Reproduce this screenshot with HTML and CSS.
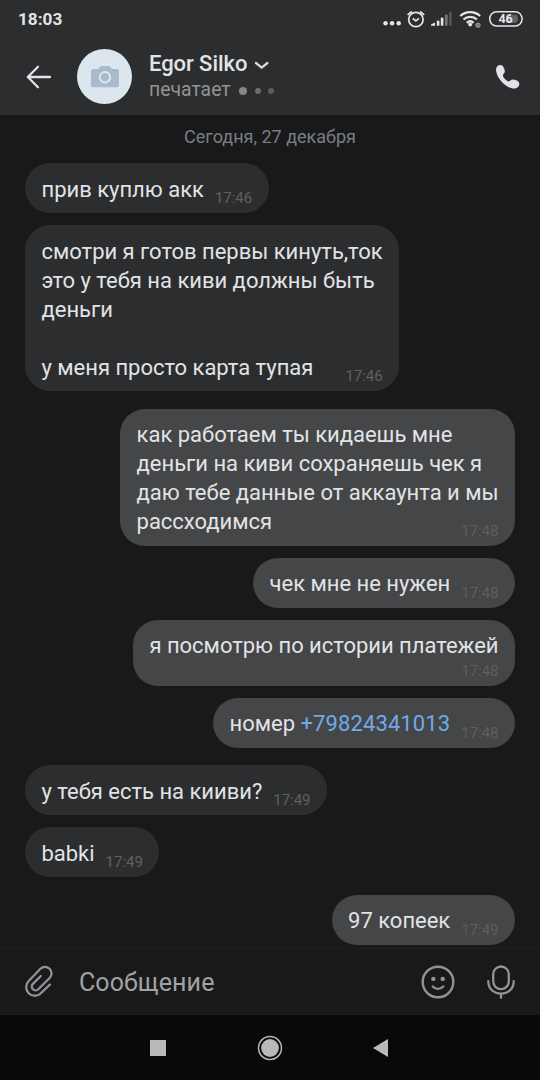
FILE: index.html
```
<!DOCTYPE html>
<html lang="ru">
<head>
    <meta charset="UTF-8">
    <meta name="viewport" content="width=device-width, initial-scale=1.0">
    <title>Egor Silko</title>
    <link rel="stylesheet" href="styles.css">
</head>
<body>
    <header class="header">
        <!-- status bar -->
        <div class="status">
            <span class="clock">18:03</span>
            <svg class="status-icons" width="140" height="24" viewBox="0 0 140 24" fill="none" stroke="#e6e6e7">
                <g fill="#e6e6e7" stroke="none">
                    <circle cx="5.5" cy="17.3" r="2.2"/>
                    <circle cx="12.1" cy="17.3" r="2.2"/>
                    <circle cx="18.7" cy="17.3" r="2.2"/>
                </g>
                <circle cx="35.9" cy="13.5" r="7.2" stroke-width="1.7"/>
                <path d="M32.8 12.300l3 2.500 3.200-2.500M27.600 8.900l4.200-3.600M44.200 8.900l-4.200-3.600" stroke-width="1.700"/>
                <g fill="#e6e6e7" stroke="none">
                    <path d="M51 19.700v-1.200l4-2v3.200z"/>
                    <path d="M56.800 14.700h2.600v5h-2.600z"/>
                    <path d="M60.800 11.700h2.600v8h-2.600z"/>
                    <path d="M65 8.700h2.600v11H65z" fill="#77787a"/>
                    <path d="M69 5.700h2.600v14H69z" fill="#56575a"/>
                </g>
                <path d="M80.300 10c5.600-5.200 14.200-5.200 19.800 0M83.500 13.500c3.800-3.500 9.600-3.500 13.400 0M86.800 16.800c2-1.800 4.800-1.800 6.800 0" stroke-width="2.300"/>
                <circle cx="90.200" cy="18.500" r="1.900" fill="#e6e6e7" stroke="none"/>
                <circle cx="98" cy="19.200" r="2.200" fill="#77787a" stroke="#aaaaac" stroke-width=".8"/>
                <path d="M126 8.500h9a3.500 3.500 0 0 1 3 3.500v1.500a3.500 3.500 0 0 1-3 3.500h-9z" fill="#626366" stroke="none"/>
                <rect x="109.700" y="5.700" width="32.400" height="14.400" rx="7" stroke-width="1.500"/>
                <text x="118.400" y="17.400" class="battery-text">46</text>
            </svg>
        </div>

        <div class="toolbar">
            <svg class="back" width="26" height="24" viewBox="0 0 26 24" fill="none" stroke="#e1e3e6" stroke-width="2.300" stroke-linecap="round" stroke-linejoin="round">
                <path d="M24 12H1.800M12 1.800L1.800 12 12 22.200"/>
            </svg>
            <div class="avatar">
                <svg width="28" height="22" viewBox="0 0 28 22">
                    <path d="M2 3h5.200l1.500-1.900Q9.500 0 11 0h6q1.500 0 2.300 1.100L20.800 3H26a2 2 0 0 1 2 2v14.300a2 2 0 0 1-2 2H2a2 2 0 0 1-2-2V5a2 2 0 0 1 2-2z" fill="#a9bacd"/>
                    <circle cx="14" cy="11.300" r="5.200" fill="none" stroke="#dce6ef" stroke-width="2"/>
                </svg>
            </div>
            <div class="person">
                <div class="name">
                    <span>Egor Silko</span>
                    <svg width="14" height="9" viewBox="0 0 14 9" fill="none" stroke="#d8dadd" stroke-width="2.300" stroke-linecap="round" stroke-linejoin="round">
                        <path d="M1 2l5.700 4.600L12.400 2"/>
                    </svg>
                </div>
                <div class="typing">
                    <span>печатает</span>
                    <i class="dot dot-big"></i>
                    <i class="dot"></i>
                    <i class="dot dot-dim"></i>
                </div>
            </div>
            <svg class="call" width="24" height="24" viewBox="0 0 24 24" fill="#e1e3e6">
                <path d="M0 4.500C0 1.800 2 0 4.100 0c2 0 2.700.8 3.400 2.200.7 1.300 1.300 2.900 1.300 4.400 0 1.700-1.900 2.500-1.900 3.900 0 2 3.900 5.800 6 5.800 1.300 0 2.100-1.700 3.900-1.700 1.600 0 4 .9 5.200 1.700 1 .7 1.300 1.600 1.300 2.700 0 2.500-2.400 4.500-5.300 4.500C10.600 23.500 0 13.200 0 4.500z"/>
            </svg>
        </div>
    </header>

    <main class="chat">
        <div class="date">Сегодня, 27 декабря</div>

        <div class="group">
            <div class="bubble">
                <span class="text">прив куплю акк</span>
                <span class="time">17:46</span>
            </div>
            <div class="bubble multi">
                <span class="text">смотри я готов первы кинуть,ток<br>это у тебя на киви должны быть<br>деньги<br><br>у меня просто карта тупая</span>
                <span class="time">17:46</span>
            </div>
        </div>

        <div class="group out">
            <div class="bubble multi">
                <span class="text">как работаем ты кидаешь мне<br>деньги на киви сохраняешь чек я<br>даю тебе данные от аккаунта и мы<br>рассходимся</span>
                <span class="time">17:48</span>
            </div>
            <div class="bubble">
                <span class="text">чек мне не нужен</span>
                <span class="time">17:48</span>
            </div>
            <div class="bubble multi below">
                <span class="text">я посмотрю по истории платежей</span>
                <span class="time">17:48</span>
            </div>
            <div class="bubble">
                <span class="text">номер <a class="phone" href="tel:+79824341013">+79824341013</a></span>
                <span class="time">17:48</span>
            </div>
        </div>

        <div class="group">
            <div class="bubble">
                <span class="text">у тебя есть на кииви?</span>
                <span class="time">17:49</span>
            </div>
            <div class="bubble">
                <span class="text">babki</span>
                <span class="time">17:49</span>
            </div>
        </div>

        <div class="group out">
            <div class="bubble">
                <span class="text">97 копеек</span>
                <span class="time">17:49</span>
            </div>
        </div>
    </main>

    <footer class="composer">
        <svg class="clip" width="28" height="32" viewBox="0 0 28 32" fill="none" stroke="#909499" stroke-width="2.300" stroke-linecap="round" stroke-linejoin="round">
            <path d="M25 18.500l-9.100 8.700A8.600 8.600 0 0 1 3.700 15L15.400 2.800a6.500 6.500 0 0 1 9.200 9.200L13.300 23.300a3.800 3.800 0 0 1-5.400-5.400l7.900-7.900"/>
        </svg>
        <span class="placeholder">Сообщение</span>
        <svg class="smile" width="34" height="34" viewBox="0 0 34 34" fill="none" stroke="#909499" stroke-width="2.400" stroke-linecap="round">
            <circle cx="17" cy="17" r="15.300"/>
            <path d="M11.700 21.500c3.100 3.200 7.500 3.200 10.600 0"/>
            <circle cx="12.300" cy="13.900" r="2.200" fill="#909499" stroke="none"/>
            <circle cx="21.700" cy="13.900" r="2.200" fill="#909499" stroke="none"/>
        </svg>
        <svg class="mic" width="28" height="34" viewBox="0 0 28 34" fill="none" stroke="#909499" stroke-width="2.300" stroke-linecap="round">
            <rect x="6.200" y="1.500" width="15.600" height="22.600" rx="7.800"/>
            <path d="M1.300 16.200c0 7.600 5.500 12.400 12.700 12.400s12.700-4.800 12.700-12.400M14 28.600v4.200"/>
        </svg>
    </footer>

    <!-- android navigation -->
    <nav class="navbar">
        <svg width="16" height="16" viewBox="0 0 16 16"><path d="M0 0h16v16H0z" fill="#b9b9b9"/></svg>
        <svg width="26" height="26" viewBox="0 0 26 26">
            <circle cx="13" cy="13" r="11.500" fill="none" stroke="#b9b9b9" stroke-width="1.500"/>
            <circle cx="13" cy="13" r="8.900" fill="#b9b9b9"/>
        </svg>
        <svg width="16" height="18" viewBox="0 0 16 18"><path d="M14 0v18L-1 9z" fill="#b9b9b9"/></svg>
    </nav>
</body>
</html>
```

FILE: styles.css
```
* {
    box-sizing: border-box;
}

body {
    margin: 0;
    width: 540px;
    height: 1080px;
    display: flex;
    flex-direction: column;
    overflow: hidden;
    background-color: #19191a;
    color: #e1e3e6;
    font-family: Roboto, "Noto Sans", sans-serif;
}

svg {
    display: block;
    flex: none;
    overflow: visible;
}

/* header */
.header {
    height: 115px;
    background-color: #2c2d2e;
}

.status {
    height: 38px;
    padding: 6px 20px 0 18px;
    display: flex;
    justify-content: space-between;
}

.clock {
    font-size: 17.2px;
    font-weight: 700;
    line-height: 27px;
}

.battery-text {
    font-size: 12.5px;
    font-weight: 700;
    fill: #e6e6e7;
    stroke: none;
}

.toolbar {
    height: 77px;
    padding: 0 20px 0 26px;
    display: flex;
    align-items: center;
}

.avatar {
    width: 55px;
    height: 55px;
    margin: 0 17px 0 25px;
    display: flex;
    align-items: center;
    justify-content: center;
    border-radius: 50%;
    background-color: #dce6ef;
}

.person {
    flex: 1;
}

.name {
    display: flex;
    align-items: center;
    gap: 8px;
    font-size: 22px;
    font-weight: 500;
    line-height: 27px;
    letter-spacing: -0.06px;
}

.name svg {
    margin-top: 4px;
}

.typing {
    display: flex;
    align-items: center;
    font-size: 19.4px;
    line-height: 26px;
    color: #939394;
}

.dot {
    width: 6px;
    height: 6px;
    margin: 2px 0 0 7.5px;
    border-radius: 50%;
    background-color: #6c6d6e;
}

.dot-big {
    width: 8px;
    height: 8px;
    margin-left: 8.5px;
    background-color: #868788;
}

.dot-dim {
    background-color: #5b5c5d;
}

/* messages */
.chat {
    height: 833px;
    padding: 0 25px;
    display: flex;
    flex-direction: column;
    gap: 17.5px;
}

.date {
    height: 30.5px;
    padding-top: 9px;
    font-size: 18px;
    line-height: 26px;
    text-align: center;
    color: #777e88;
}

.group {
    display: flex;
    flex-direction: column;
    align-items: flex-start;
    gap: 12px;
}

.out {
    align-items: flex-end;
}

.bubble {
    min-height: 50px;
    padding: 12px 16.5px 9px;
    display: flex;
    gap: 11px;
    border-radius: 25px;
    background-color: #2c2d2e;
    font-size: 22px;
    line-height: 29px;
    letter-spacing: -0.02px;
}

.out .bubble {
    padding-top: 11px;
    padding-bottom: 10px;
    background-color: #454647;
}

.text {
    white-space: nowrap;
}

.time {
    align-self: flex-end;
    margin-bottom: -4px;
    font-size: 15px;
    line-height: 20px;
    color: #5f6061;
}

.out .time {
    margin-bottom: -5px;
    color: #5d5e5f;
}

/* time sits over the last line */
.multi {
    display: grid;
}

.multi .text,
.multi .time {
    grid-area: 1 / 1;
}

.multi .time {
    justify-self: end;
}

/* last line is too long, time goes under it */
.below .text {
    padding-bottom: 16px;
}

.phone {
    color: #71aaeb;
    letter-spacing: 0.1px;
    text-decoration: none;
}

/* message input */
.composer {
    height: 67px;
    padding: 0 25px;
    display: flex;
    align-items: center;
    border-top: 1px solid #202021;
}

.placeholder {
    flex: 1;
    margin-left: 26px;
    font-size: 25px;
    letter-spacing: 0.1px;
    color: #a0a2a4;
}

.mic {
    margin-left: 32px;
}

.navbar {
    height: 65px;
    display: flex;
    align-items: center;
    justify-content: center;
    gap: 91px;
    background-color: #090909;
}
```
